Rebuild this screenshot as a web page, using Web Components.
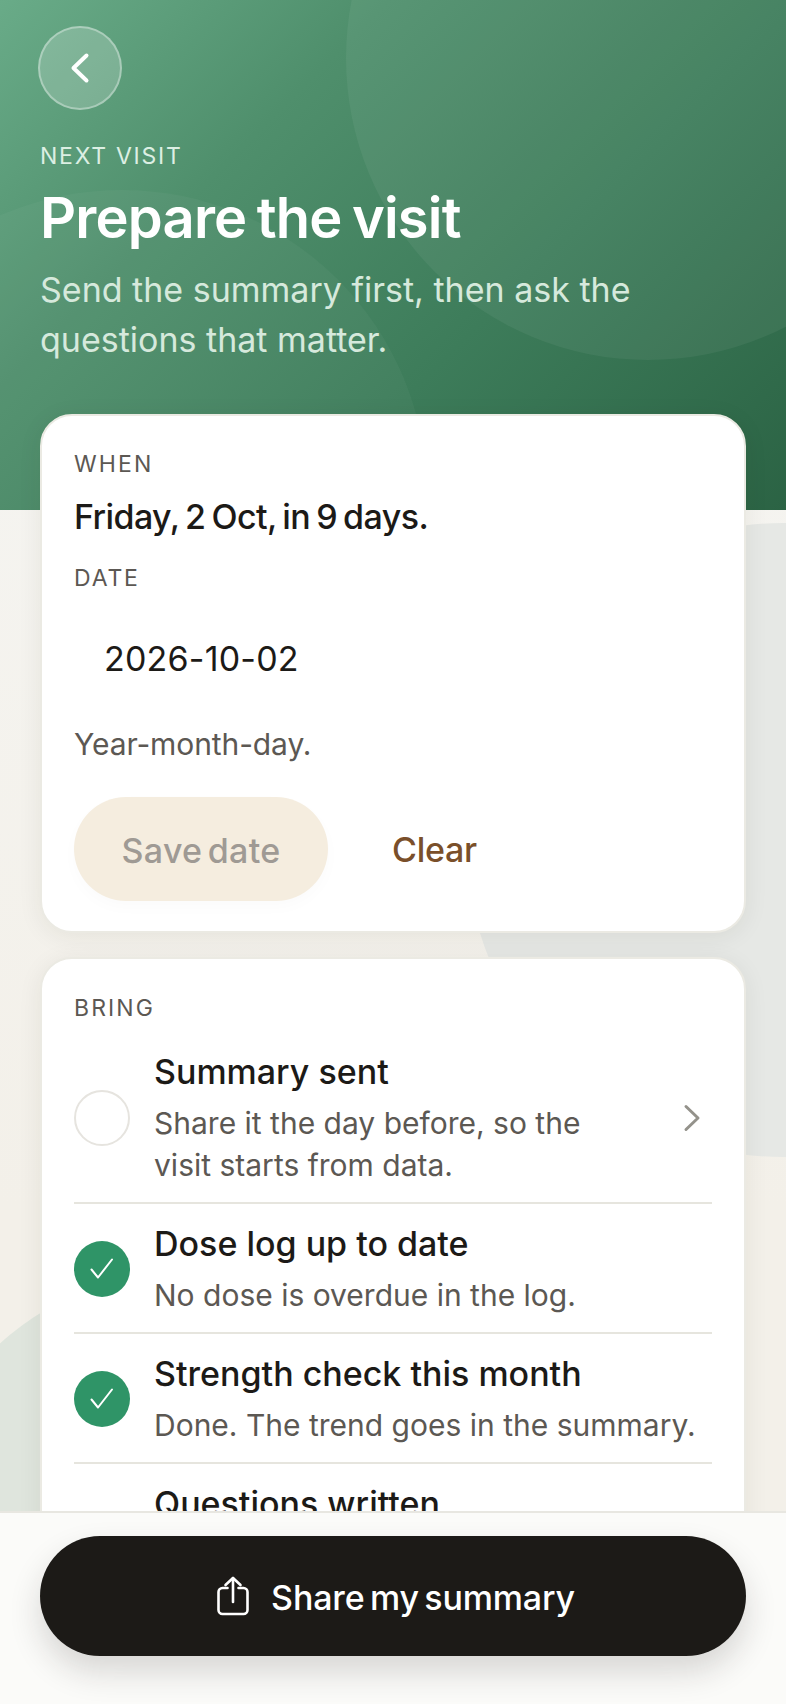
<!doctype html>
<html lang="en">
<head>
<meta charset="utf-8">
<title>Prepare the visit</title>
<style>
  html, body { margin: 0; padding: 0; }
  body { font-family: Inter, "Noto Sans", sans-serif; background: #f4f2ec; }
</style>
</head>
<body>
<visit-screen>
  <visit-hero slot="hero" eyebrow="NEXT VISIT" heading="Prepare the visit">Send the summary first, then ask the<br>questions that matter.</visit-hero>

  <info-card label="WHEN" style="--top:33px">
    <date-form summary="Friday, 2 Oct, in 9 days." value="2026-10-02"></date-form>
  </info-card>

  <info-card label="BRING" style="--top:34px">
    <check-row title="Summary sent" chevron>Share it the day before, so the<br>visit starts from data.</check-row>
    <check-row title="Dose log up to date" done>No dose is overdue in the log.</check-row>
    <check-row title="Strength check this month" done>Done. The trend goes in the summary.</check-row>
    <check-row title="Questions written"><br>&nbsp;</check-row>
  </info-card>

  <share-bar slot="footer">Share my summary</share-bar>
</visit-screen>

<script>
window.customElements.define('visit-screen', class extends HTMLElement {
  constructor(){ super(); this.attachShadow({mode:'open'}); }
  connectedCallback(){
    this.shadowRoot.innerHTML = `
    <style>
      :host{
        display:flex;
        flex-direction:column;
        width:786px;
        height:1704px;
        overflow:hidden;
        background:#f4f2ec;
      }
      .scroll{
        position:relative; flex:1; min-height:0; overflow:hidden;
        background:linear-gradient(180deg,#f5f4f0 30%,#f3f0e9 80%);
      }
      .shape{ position:absolute; border-radius:50%; }
      .grey{ left:466px; top:523px; width:634px; height:634px; background:#e6e8e5; }
      .green{ left:-100px; top:1267px; width:600px; height:600px; background:#dfe5dd; }
      .cards{
        position:relative;
        display:flex;
        flex-direction:column;
        gap:24px;
        margin-top:-96px;
        padding:0 40px;
      }
    </style>
    <div class="scroll">
      <div class="shape grey"></div>
      <div class="shape green"></div>
      <slot name="hero"></slot>
      <div class="cards"><slot></slot></div>
    </div>
    <slot name="footer"></slot>`;
  }
});

window.customElements.define('visit-hero', class extends HTMLElement {
  constructor(){ super(); this.attachShadow({mode:'open'}); }
  connectedCallback(){
    this.shadowRoot.innerHTML = `
    <style>
      :host{
        display:block;
        position:relative;
        height:510px;
        box-sizing:border-box;
        padding:26px 40px 0;
        overflow:hidden;
        color:#fff;
        background:linear-gradient(135deg,#69ab88 0%,#4f8f6c 30%,#3d7c5a 62%,#2b6344 100%);
      }
      .c{ position:absolute; border-radius:50%; background:rgba(255,255,255,.055); }
      .c1{ left:346px; top:-244px; width:604px; height:604px; }
      .c2{ left:-183px; top:190px; width:610px; height:610px; background:rgba(255,255,255,.035); }
      .inner{ position:relative; }
      button{
        display:flex; align-items:center; justify-content:center;
        width:84px; height:84px; padding:0; margin-left:-2px; box-sizing:border-box;
        border-radius:50%;
        border:2px solid rgba(255,255,255,.34);
        background:rgba(255,255,255,.2);
      }
      .eyebrow{ margin:29px 0 0; font-size:23px; line-height:34px; font-weight:400; letter-spacing:1.75px; color:#dcefe3; }
      h1{ margin:11px 0 0; font-size:56px; line-height:68px; font-weight:600; letter-spacing:-.8px; word-spacing:-3px; }
      p{ margin:13px 0 0; font-size:34px; line-height:50px; color:#d6e9dc; }
    </style>
    <span class="c c1"></span><span class="c c2"></span>
    <div class="inner">
      <button aria-label="Back">
        <svg width="44" height="44" viewBox="0 0 44 44" fill="none" stroke="#fff" stroke-width="4" stroke-linecap="round" stroke-linejoin="round"><path d="M28.5 9.5 15.5 22 28.5 34.5"/></svg>
      </button>
      <div class="eyebrow">${this.getAttribute('eyebrow')}</div>
      <h1>${this.getAttribute('heading')}</h1>
      <p><slot></slot></p>
    </div>`;
  }
});

window.customElements.define('info-card', class extends HTMLElement {
  constructor(){ super(); this.attachShadow({mode:'open'}); }
  connectedCallback(){
    this.shadowRoot.innerHTML = `
    <style>
      :host{
        display:block;
        box-sizing:border-box;
        background:#fff;
        border:2px solid #ebeae3;
        border-radius:32px;
        padding:var(--top,32px) 32px 30px;
        box-shadow:0 4px 24px rgba(40,40,20,.07);
      }
      .label{ margin-bottom:9px; font-size:23px; line-height:30px; letter-spacing:2.1px; color:#5c5853; }
    </style>
    <div class="label">${this.getAttribute('label')}</div>
    <slot></slot>`;
  }
});

window.customElements.define('date-form', class extends HTMLElement {
  constructor(){ super(); this.attachShadow({mode:'open'}); }
  connectedCallback(){
    this.shadowRoot.innerHTML = `
    <style>
      :host{ display:block; }
      .summary{ margin-top:16px; font-size:34px; line-height:44px; font-weight:500; letter-spacing:-.6px; word-spacing:-2.4px; color:#1c1a17; }
      .label{ margin-top:24px; font-size:23px; line-height:30px; letter-spacing:1.85px; color:#5c5853; }
      .value{ padding:44px 30px 0; font-size:34px; line-height:44px; letter-spacing:.2px; color:#1c1a17; }
      .hint{ margin-top:43px; font-size:30px; line-height:40px; letter-spacing:-.1px; color:#5c5853; }
      .actions{ display:flex; align-items:center; gap:64px; margin-top:33px; }
      .save{
        width:254px; height:104px; border:0; border-radius:52px; padding:3px 0 0;
        font:500 34px Inter,"Noto Sans",sans-serif; letter-spacing:.3px; word-spacing:-4px;
        background:#f5eddf; color:#9f9a94;
        box-shadow:0 6px 16px rgba(0,0,0,.02);
      }
      .clear{ border:0; padding:0; background:none; font:500 34px Inter,"Noto Sans",sans-serif; letter-spacing:-.3px; color:#7a4f2a; }
    </style>
    <div class="summary">${this.getAttribute('summary')}</div>
    <div class="label">DATE</div>
    <div class="value">${this.getAttribute('value')}</div>
    <div class="hint">Year-month-day.</div>
    <div class="actions">
      <button class="save">Save date</button>
      <button class="clear">Clear</button>
    </div>`;
  }
});

window.customElements.define('check-row', class extends HTMLElement {
  constructor(){ super(); this.attachShadow({mode:'open'}); }
  connectedCallback(){
    const done = this.hasAttribute('done');
    const mark = done
      ? `<span class="mark on"><svg width="28" height="28" viewBox="0 0 28 28" fill="none" stroke="#fff" stroke-width="2" stroke-linecap="round" stroke-linejoin="round"><path d="M3.5 14.5 10 22.5 24 4.5"/></svg></span>`
      : `<span class="mark"></span>`;
    const chevron = this.hasAttribute('chevron')
      ? `<svg class="chev" width="24" height="32" viewBox="0 0 24 32" fill="none" stroke="#94928b" stroke-width="3" stroke-linecap="round" stroke-linejoin="round"><path d="M6 4.5 18 16 6 27.5"/></svg>`
      : '';
    this.shadowRoot.innerHTML = `
    <style>
      :host{
        display:flex;
        align-items:center;
        gap:24px;
        padding:18px 0 16px;
        border-bottom:2px solid #e6e5de;
      }
      :host(:last-child){ border-bottom:0; }
      .mark{
        flex:none; display:flex; align-items:center; justify-content:center;
        width:56px; height:56px; box-sizing:border-box;
        border-radius:50%; border:2px solid #e6e4df; background:#fff;
      }
      .mark.on{ border:0; background:#2f9467; }
      .text{ flex:1; min-width:0; }
      .title{ font-size:34px; line-height:44px; font-weight:500; color:#1c1a17; white-space:nowrap; }
      .sub{ margin-top:8px; min-height:42px; font-size:30px; line-height:42px; color:#5c5853; white-space:nowrap; }
      .chev{ flex:none; margin-right:8px; }
    </style>
    ${mark}
    <div class="text">
      <div class="title">${this.getAttribute('title')}</div>
      <div class="sub"><slot></slot></div>
    </div>
    ${chevron}`;
  }
});

window.customElements.define('share-bar', class extends HTMLElement {
  constructor(){ super(); this.attachShadow({mode:'open'}); }
  connectedCallback(){
    this.shadowRoot.innerHTML = `
    <style>
      :host{
        display:block;
        flex:none;
        position:relative;
        box-sizing:border-box;
        height:193px;
        padding:23px 40px 0;
        border-top:2px solid #e8e7e1;
        background:#fbfbf9;
      }
      button{
        display:flex; align-items:center; justify-content:center; gap:22px;
        width:100%; height:120px; padding:0 0 0 6px; border:0;
        border-radius:60px;
        background:#1c1a17; color:#fff;
        font:500 34px Inter,"Noto Sans",sans-serif; letter-spacing:-.15px; word-spacing:-3.5px;
        box-shadow:0 16px 32px rgba(28,26,23,.16);
      }
      span{ padding-top:3px; }
    </style>
    <button>
      <svg width="32" height="40" viewBox="0 0 32 40" fill="none" stroke="#fff" stroke-width="2.6" stroke-linecap="round" stroke-linejoin="round"><path d="M10.5 12H5.5a4 4 0 0 0-4 4V34a4 4 0 0 0 4 4h21a4 4 0 0 0 4-4V16a4 4 0 0 0-4-4H21.5"/><path d="M16 26V2"/><path d="M8.5 9 16 2l7.5 7"/></svg>
      <span><slot></slot></span>
    </button>`;
  }
});
</script>
</body>
</html>
